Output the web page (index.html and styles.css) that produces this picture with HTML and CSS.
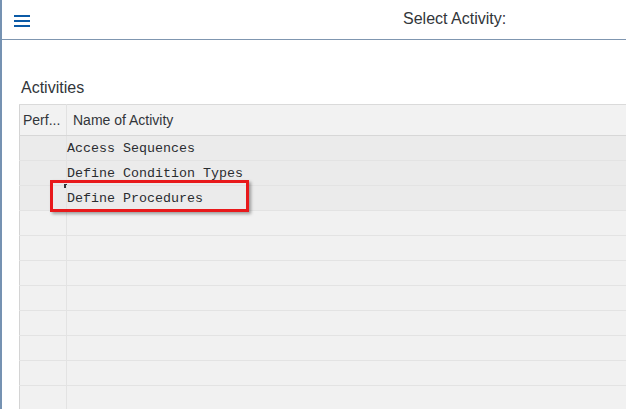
FILE: index.html
```html
<!DOCTYPE html>
<html lang="en">
<head>
  <meta charset="UTF-8" />
  <title>Select Activity</title>
  <link rel="stylesheet" href="styles.css">
</head>
<body>
  <div class="shell">
    <header class="topbar">
      <button class="menu" aria-label="Menu">
        <svg width="16" height="12" viewBox="0 0 16 12">
          <rect x="0" y="0" width="16" height="2" fill="#0b5aa6"/>
          <rect x="0" y="5" width="16" height="2" fill="#0b5aa6"/>
          <rect x="0" y="10" width="16" height="2" fill="#0b5aa6"/>
        </svg>
      </button>
      <div class="title">Select Activity:</div>
    </header>

    <h2 class="section-title">Activities</h2>

    <div class="table-wrap">
      <table class="grid">
        <thead>
          <tr>
            <th class="col-perf">Perf...</th>
            <th class="col-name">Name of Activity</th>
          </tr>
        </thead>
        <tbody>
          <tr class="filled"><td></td><td class="mono">Access Sequences</td></tr>
          <tr class="filled"><td></td><td class="mono">Define Condition Types</td></tr>
          <tr class="filled"><td></td><td class="mono focus">Define Procedures<span class="cur-top"></span><span class="cur-bottom"></span></td></tr>
          <tr><td></td><td></td></tr>
          <tr><td></td><td></td></tr>
          <tr><td></td><td></td></tr>
          <tr><td></td><td></td></tr>
          <tr><td></td><td></td></tr>
          <tr><td></td><td></td></tr>
          <tr><td></td><td></td></tr>
          <tr><td></td><td></td></tr>
        </tbody>
      </table>
      <div class="highlight"></div>
    </div>
  </div>
</body>
</html>
```

FILE: styles.css
```css
html, body {
  margin: 0;
  height: 100%;
  overflow: hidden;
  background: #fff;
}
body {
  font-family: "Liberation Sans", Arial, sans-serif;
  color: #32363a;
}
.shell {
  height: 100%;
  border-left: 2px solid #7592b2;
  box-sizing: border-box;
}
.topbar {
  height: 39px;
  border-bottom: 1px solid #7f96b0;
  display: flex;
  align-items: center;
}
.menu {
  background: none;
  border: none;
  padding: 0;
  margin: 2px 0 0 12px;
  width: 16px;
  height: 12px;
  display: flex;
  cursor: pointer;
}
.title {
  margin-left: 373px;
  font-size: 16px;
  padding-bottom: 1px;
}
.section-title {
  font-size: 16px;
  font-weight: normal;
  margin: 39px 0 0 19px;
  height: 25px;
  line-height: 18px;
}
.table-wrap {
  position: relative;
  margin-left: 17px;
}
.grid {
  border-collapse: collapse;
  table-layout: fixed;
  width: 620px;
  border-left: 1px solid #d4d4d4;
}
.grid th {
  background: #f2f2f2;
  font-weight: normal;
  font-size: 14px;
  text-align: left;
  height: 30px;
  padding: 0;
  white-space: nowrap;
  overflow: hidden;
  border-top: 1px solid #dadada;
  border-bottom: 1px solid #d7d7d7;
}
.col-perf {
  width: 43px;
  padding-left: 3px !important;
  border-right: 1px solid #e2e2e2;
}
.col-name {
  padding-left: 6px !important;
}
.grid td {
  height: 24px;
  padding: 0;
  background: #f1f1f1;
  border-bottom: 1px solid #e3e3e3;
}
.grid td:first-child {
  border-right: 1px solid #e3e3e3;
}
.grid tr.filled td {
  background: #ebebeb;
}
.mono {
  font-family: "Liberation Mono", "Courier New", monospace;
  font-size: 13.33px;
  padding-left: 0;
  color: #2a2d30;
}
.focus {
  position: relative;
}
.cur-top {
  position: absolute;
  left: -3px;
  top: -2px;
  width: 3px;
  height: 4px;
  border-left: 2px solid #32363a;
  border-top: 1px solid #32363a;
  box-sizing: border-box;
}
.cur-bottom {
  position: absolute;
  left: -3px;
  bottom: -2px;
  width: 1px;
  height: 3px;
  background: #32363a;
}
.highlight {
  position: absolute;
  left: 31px;
  top: 76px;
  width: 199px;
  height: 32px;
  border: 3px solid #e8191b;
  box-sizing: border-box;
  box-shadow: 2px 2px 3px rgba(0, 0, 0, 0.35);
}
```
